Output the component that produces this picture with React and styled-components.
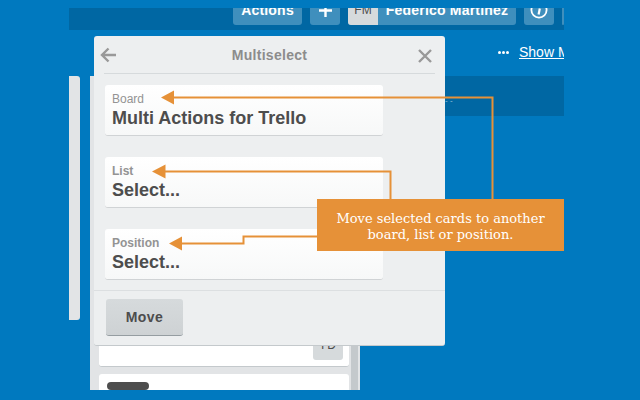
import React from 'react';
import styled, { createGlobalStyle } from 'styled-components';

const GlobalStyle = createGlobalStyle`
  html, body { margin: 0; padding: 0; background: #0079bf; }
  body { font-family: "Liberation Sans", Arial, sans-serif; }
`;

const Stage = styled.div`
  position: relative;
  width: 640px;
  height: 400px;
  overflow: hidden;
  background: #0079bf;
  padding: 8px 76px 10px 69px;
  box-sizing: border-box;
`;

const Board = styled.div`
  height: 100%;
  overflow: hidden;
`;

// barra superior, cortada arriba
const TopBar = styled.div`
  height: 22px;
  background: #0067a3;
  display: flex;
  justify-content: flex-end;
  align-items: flex-end;
  gap: 8px;
  padding-bottom: 5px;
  box-sizing: border-box;
`;

const BarButton = styled.div`
  height: 32px;
  flex: none;
  width: ${({ w }) => w}px;
  padding-top: 2px;
  box-sizing: border-box;
  background: #3f8fbd;
  border-radius: 3px;
  color: #fff;
  font-weight: bold;
  font-size: 14px;
  letter-spacing: 0.2px;
  display: flex;
  align-items: center;
  justify-content: center;
  overflow: hidden;
`;

const BarIcon = styled.svg`
  flex: none;
  margin-top: ${({ drop }) => drop}px;
`;

const Avatar = styled.div`
  width: 30px;
  height: 32px;
  margin-top: -2px;
  padding-top: 2px;
  box-sizing: border-box;
  flex: none;
  background: #d6dadc;
  color: #4d4d4d;
  font-size: 12px;
  font-weight: normal;
  letter-spacing: 0;
  display: flex;
  align-items: center;
  justify-content: center;
`;

const UserName = styled.span`
  flex: 1;
  text-align: center;
`;

const SubBar = styled.div`
  height: 46px;
  display: flex;
  justify-content: flex-end;
  align-items: center;
  color: #fff;
  font-size: 14px;
  overflow: hidden;
  white-space: nowrap;
  box-sizing: border-box;
  padding-bottom: 2px;
`;

const Dots = styled.div`
  display: flex;
  gap: 1px;
  margin-right: 10px;
`;

const Dot = styled.span`
  width: 3px;
  height: 3px;
  background: #fff;
  border-radius: 50%;
`;

const ShowMenu = styled.span`
  text-decoration: underline;
  width: 45px;
  overflow: hidden;
`;

const Lists = styled.div`
  display: flex;
  align-items: flex-start;
  height: 314px;
`;

const SideList = styled.div`
  width: 11px;
  height: 244px;
  background: #e2e4e6;
  border-radius: 0 3px 3px 0;
  flex: none;
  margin-right: 10px;
`;

const MainList = styled.div`
  width: 270px;
  height: 314px;
  flex: none;
  background: #e2e4e6;
  display: flex;
  flex-direction: column;
  padding: 224px 11px 0 9px;
  box-sizing: border-box;
  position: relative;
  overflow: hidden;
`;

const Scrollbar = styled.div`
  position: absolute;
  right: 2px;
  top: 0;
  bottom: 0;
  width: 7px;
  background: #c4c9cc;
`;

const Card = styled.div`
  background: #fff;
  border-radius: 3px;
  border-bottom: 1px solid #c4c9cc;
  width: 250px;
  height: ${({ h }) => h}px;
  flex: none;
  margin-top: 7px;
  box-sizing: border-box;
  display: flex;
`;

const Initials = styled.div`
  width: 30px;
  height: 30px;
  margin: auto 6px 6px auto;
  background: #d6dadc;
  border-radius: 3px;
  color: #4d4d4d;
  font-size: 12px;
  letter-spacing: 1px;
  display: flex;
  align-items: flex-start;
  justify-content: center;
  padding-top: 8px;
  box-sizing: border-box;
`;

const Label = styled.div`
  width: 42px;
  height: 8px;
  background: #4d4d4d;
  border-radius: 4px;
  margin: 8px 0 0 8px;
`;

const ListHeader = styled.div`
  width: 119px;
  height: 40px;
  background: #0067a3;
  flex: none;
  margin-left: auto;
  position: relative;
`;

const Dash = styled.span`
  position: absolute;
  left: 0;
  top: 24px;
  color: #9fc4dc;
  font-size: 8px;
  line-height: 1px;
`;

const Modal = styled.div`
  position: absolute;
  left: 94px;
  top: 36px;
  width: 351px;
  height: 310px;
  background: #edeff0;
  border-radius: 3px;
  border-bottom: 1px solid #c4c9cc;
  box-sizing: border-box;
  display: flex;
  flex-direction: column;
`;

const ModalHeader = styled.div`
  height: 38px;
  margin: 0 10px;
  border-bottom: 1px solid #d6dadc;
  display: flex;
  align-items: center;
  justify-content: space-between;
  padding: 1px 3px 0 0;
  box-sizing: border-box;
  flex: none;
`;

const ModalTitle = styled.div`
  font-size: 14px;
  font-weight: bold;
  color: #8c8c8c;
  letter-spacing: 0.3px;
  margin-left: 5px;
`;

const BackIcon = styled.svg`
  width: 16px;
  height: 16px;
  flex: none;
  margin-left: -4px;
  stroke: #999;
  stroke-width: 2.4;
  fill: none;
`;

const CloseIcon = styled.svg`
  width: 14px;
  height: 14px;
  flex: none;
  margin-top: 2px;
  stroke: #999;
  stroke-width: 2.4;
  fill: none;
`;

const FieldStack = styled.div`
  flex: 1;
  display: flex;
  flex-direction: column;
  gap: 21px;
  padding: 11px 0 0 11px;
`;

const Field = styled.div`
  width: 278px;
  height: 51px;
  box-sizing: border-box;
  background: linear-gradient(#fff, #f7f8f8);
  border-radius: 3px;
  border-bottom: 1px solid #d0d3d5;
  padding: 7px 7px 0 7px;
`;

const FieldLabel = styled.div`
  font-size: 12px;
  line-height: 14px;
  color: #939393;
  font-weight: ${({ b }) => (b ? 'bold' : 'normal')};
`;

const FieldValue = styled.div`
  font-size: 18px;
  line-height: 22px;
  margin-top: 1px;
  font-weight: bold;
  color: #4d4d4d;
`;

const ModalFooter = styled.div`
  height: 55px;
  flex: none;
  border-top: 1px solid #dcdfe1;
  padding: 8px 12px;
  box-sizing: border-box;
`;

const MoveButton = styled.div`
  width: 77px;
  height: 37px;
  background: linear-gradient(#d6dadc, #ced2d4);
  border-radius: 3px;
  border-bottom: 1px solid #959da1;
  box-sizing: border-box;
  color: #4d4d4d;
  font-weight: bold;
  font-size: 14px;
  letter-spacing: 0.4px;
  display: flex;
  align-items: center;
  justify-content: center;
`;

const Arrows = styled.svg`
  position: absolute;
  left: 0;
  top: 0;
  width: 640px;
  height: 400px;
`;

const Callout = styled.div`
  position: absolute;
  left: 317px;
  top: 199px;
  width: 247px;
  height: 52px;
  padding-top: 3px;
  box-sizing: border-box;
  background: #e69138;
  color: #fff;
  font-family: "DejaVu Serif", "Liberation Serif", serif;
  font-size: 13px;
  line-height: 16px;
  text-align: center;
  display: flex;
  align-items: center;
  justify-content: center;
`;

const fields = [
  { label: 'Board', value: 'Multi Actions for Trello' },
  { label: 'List', value: 'Select...', bold: true },
  { label: 'Position', value: 'Select...', bold: true },
];

export default function App() {
  return (
    <>
      <GlobalStyle />
      <Stage>
        <Board>
          <TopBar>
            <BarButton w={69}>Actions</BarButton>
            <BarButton w={30}>
              <BarIcon drop={1} width="13" height="13" viewBox="0 0 13 13">
                <path d="M6.5 0v13M0 6.5h13" stroke="#fff" strokeWidth="2.4" />
              </BarIcon>
            </BarButton>
            <BarButton w={168}>
              <Avatar>FM</Avatar>
              <UserName>Federico Martinez</UserName>
            </BarButton>
            <BarButton w={30}>
              <BarIcon drop={0} width="18" height="18" viewBox="0 0 18 18" fill="none">
                <circle cx="9" cy="9" r="7.6" stroke="#fff" strokeWidth="1.8" />
                <path d="M9.8 7.5l-1.2 6" stroke="#fff" strokeWidth="2.2" />
              </BarIcon>
            </BarButton>
            <BarButton w={2} />
          </TopBar>
          <SubBar>
            <Dots><Dot /><Dot /><Dot /></Dots>
            <ShowMenu>Show Menu</ShowMenu>
          </SubBar>
          <Lists>
            <SideList />
            <MainList>
              <Scrollbar />
              <Card h={60}><Initials>TD</Initials></Card>
              <Card h={40}><Label /></Card>
            </MainList>
            <ListHeader><Dash>- -</Dash></ListHeader>
          </Lists>
        </Board>

        <Modal>
          <ModalHeader>
            <BackIcon viewBox="0 0 16 16"><path d="M16 8H2M8.5 1.5L2 8l6.5 6.5" /></BackIcon>
            <ModalTitle>Multiselect</ModalTitle>
            <CloseIcon viewBox="0 0 14 14"><path d="M1 1l12 12M13 1L1 13" /></CloseIcon>
          </ModalHeader>
          <FieldStack>
            {fields.map((f) => (
              <Field key={f.label}>
                <FieldLabel b={f.bold}>{f.label}</FieldLabel>
                <FieldValue>{f.value}</FieldValue>
              </Field>
            ))}
          </FieldStack>
          <ModalFooter>
            <MoveButton>Move</MoveButton>
          </ModalFooter>
        </Modal>

        <Arrows viewBox="0 0 640 400" fill="none">
          <path d="M173 97.5H492.5V199M164 171.5H390.5V199M181 243.5H243.5V236.5H317" stroke="#e69138" strokeWidth="2" />
          <path d="M161 97.5L174 90.5V104.5Z M152 171.5L165.5 164.5V178.5Z M169 243.5L182 236.5V250.5Z" fill="#e69138" />
        </Arrows>
        <Callout>Move selected cards to another<br />board, list or position.</Callout>
      </Stage>
    </>
  );
}
